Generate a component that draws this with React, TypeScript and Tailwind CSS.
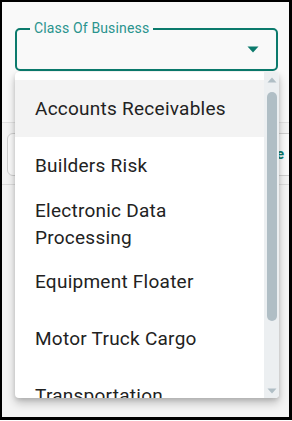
import React from "react";

const items: string[][] = [
  ["Accounts Receivables"],
  ["Builders Risk"],
  ["Electronic Data", "Processing"],
  ["Equipment Floater"],
  ["Motor Truck Cargo"],
  ["Transportation"],
];

export default function App() {
  return (
    <div
      className="relative w-[292px] h-[421px] bg-white overflow-hidden"
      style={{ fontFamily: "Roboto, 'Noto Sans', sans-serif" }}
    >
      <div className="relative w-[292px] h-[420px] border-l-2 border-t-2 border-r-[3px] border-b-[3px] border-black overflow-hidden bg-[#f4f4f4]">
        {/* top section */}
        <div className="h-[121px] bg-[#f9f9f9] border-b border-[#e2e2e2] pt-[26px] pl-[13px]">
          <div className="relative w-[263px] h-[43px] border-2 border-[#0b7a6c] rounded-[5px]">
            <span className="absolute -top-[12px] left-[13px] px-[4px] bg-[#f9f9f9] text-[14px] leading-[20px] text-[#2a948e] tracking-[0.15px]">
              Class Of Business
            </span>
            <svg
              className="absolute right-[17px] top-[16px]"
              width="12"
              height="7"
              viewBox="0 0 12 7"
            >
              <path d="M0.5 0.5 L11.5 0.5 L6 6.5 Z" fill="#0b7a6c" />
            </svg>
          </div>
        </div>
        {/* lower section (behind menu) */}
        <div className="pt-[10px] pl-[5px]">
          <div className="h-[43px] mr-[-12px] border border-[#cfcfcf] rounded-[6px] bg-[#fafafa] flex items-center justify-end pr-[16px]">
            <span className="text-[14px] font-bold text-[#0b7a6c]">Browse</span>
          </div>
          <div className="mt-[8px] -ml-[5px] border-b border-[#dcdcdc]" />
        </div>

        {/* dropdown menu */}
        <div className="absolute left-[13px] top-[70px] w-[264px] h-[326px] bg-white rounded-[4px] shadow-[0_5px_10px_rgba(0,0,0,0.22),0_2px_4px_rgba(0,0,0,0.12)] overflow-hidden flex">
          <div className="flex-1 pt-[8px] overflow-hidden">
            {items.map((lines, i) => (
              <div
                key={i}
                className={`flex items-center min-h-[57px] py-[2.5px] pl-[20px] text-[19px] leading-[27px] tracking-[0.25px] text-[#222222] whitespace-nowrap ${
                  i === 0 ? "bg-[#f3f3f3]" : ""
                }`}
              >
                <div>
                  {lines.map((l, j) => (
                    <div key={j}>{l}</div>
                  ))}
                </div>
              </div>
            ))}
          </div>
          {/* scrollbar */}
          <div className="w-[15px] bg-[#eceff1] flex flex-col items-center">
            <svg className="mt-[5px]" width="10" height="6" viewBox="0 0 10 6">
              <path d="M5 0.5 L9.5 5.5 L0.5 5.5 Z" fill="#b0bec5" />
            </svg>
            <div className="mt-[9px] w-[10px] h-[229px] rounded-full bg-[#b0bec5]" />
            <div className="flex-1" />
            <svg className="mb-[4px]" width="10" height="6" viewBox="0 0 10 6">
              <path d="M0.5 0.5 L9.5 0.5 L5 5.5 Z" fill="#b0bec5" />
            </svg>
          </div>
        </div>
      </div>
    </div>
  );
}
